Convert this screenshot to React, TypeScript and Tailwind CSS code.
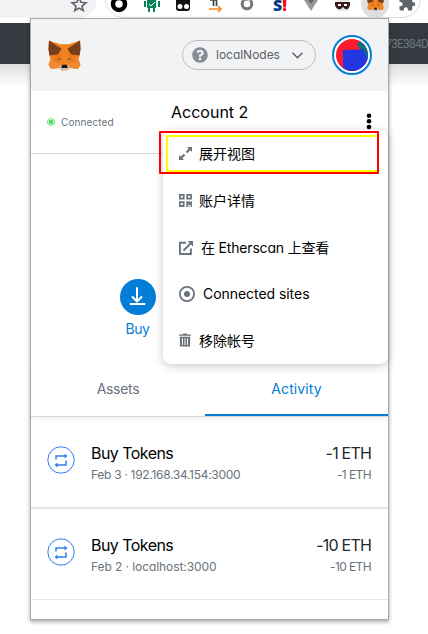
import React from "react";
import { FaQuestionCircle } from "react-icons/fa";
import { MdExtension } from "react-icons/md";

const CJK = "font-['Inter','Noto_Sans_CJK_SC',sans-serif]";

function Fox({ className }: { className: string }) {
  return (
    <svg viewBox="0 0 34 32" className={className} preserveAspectRatio="none">
      <path d="M1 .5L12.500 4.500h9L33 .5l.5 9-1 6-1 5L33.500 25 31 30l-8-1-3.500 2.500h-5L11 29l-8 1L.5 25l2-4.500-1-5-1-6z" fill="#f08423" />
      <path d="M1 .5L14 9l-3.500 6-9 1-1-6.500zM33 .5L20 9l3.500 6 9 1 1-6.500z" fill="#763e1a" />
      <path d="M14 9l-3.500 6L3 17l7 3 4 1zM20 9l3.500 6 7.500 2-7 3-4 1z" fill="#ee7d1c" />
      <path d="M3 20.500l8-.5 2 6-2 3-8 1L.5 25zM31 20.500l-8-.5-2 6 2 3 8 1 2.500-5z" fill="#f0892f" />
      <path d="M4 21l7-1 1 4zM30 21l-7-1-1 4z" fill="#e5761f" />
      <path d="M10 18l4 1.500-.5 1.500-3-1zM24 18l-4 1.500.5 1.500 3-1z" fill="#a15a30" />
      <path d="M13 26h8l1.500 2.500-3 3h-5l-3-3z" fill="#d7c1b3" />
      <path d="M14.500 25.500h5l.8 3.300h-6.600z" fill="#161616" />
    </svg>
  );
}

function BrowserBar() {
  return (
    <div className="relative h-[23px] bg-white">
      <div className="absolute -left-4 -top-5 h-[38px] w-[113px] rounded-full bg-[#f1f3f4]" />
      <div className="absolute left-[105px] -top-5 h-[38px] w-[316px] rounded-full border border-[#dadce0]" />
      <svg className="absolute inset-0" width="428" height="23" viewBox="0 0 428 23">
        <path d="M79-2.500l2 4.800 5 .5-4 3.300 1.200 4.400-4.200-2.400-4.200 2.400 1.200-4.400-4-3.300 5-.5z" fill="none" stroke="#5f6368" strokeWidth="1.600" />
        <circle cx="119" cy="4" r="6" fill="none" stroke="#000" strokeWidth="4.500" />
        <path d="M147 0h9v8h-9zM144 1h2v6h-2zM158 1h2v6h-2zM148 8h2v4h-2zM153 8h2v4h-2z" fill="#08845a" />
        <path d="M149 4l2 2 4-4" fill="none" stroke="#fff" />
        <path d="M176 0h14v8q0 3-3 3h-8q-3 0-3-3z" fill="#111" />
        <circle cx="180" cy="6.500" r="2.500" fill="#fff" /><circle cx="186.500" cy="6.500" r="2.500" fill="#fff" />
        <path d="M210 0h6M213.500 0v6M216.500 0v6" fill="none" stroke="#37474f" strokeWidth="1.700" />
        <path d="M209 9h11M218 6l3 3-3 3" fill="none" stroke="#f58a1f" strokeWidth="1.700" />
        <circle cx="247" cy="4" r="4.800" fill="none" stroke="#777" strokeWidth="3" />
        <path d="M244 0q3-2 6 1" fill="none" stroke="#ccc" strokeWidth="2" />
        <path d="M304 0h14l-7 11z" fill="#9a9a9a" /><path d="M308 0h6l-3 4z" fill="#666" />
        <path d="M337 0h12v11h-12z" fill="#e6e6e6" />
        <path d="M335 2h15v3q-1 5-5 4l-2-2-2 2q-5 1-6-4z" fill="#3b1d20" />
        <path d="M338 4h3v2h-3zM344 4h3v2h-3z" fill="#fff" />
        <circle cx="375" cy="4" r="14" fill="#dedfe1" />
      </svg>
      <span className="absolute left-[273px] top-0 whitespace-nowrap font-['Open_Sans',sans-serif] text-[16px] font-extrabold leading-[11px] text-[#063b8c]">S<span className="text-[#f00]">!</span></span>
      <Fox className="absolute left-[367px] -top-[5px] h-[16px] w-[17px]" />
      <MdExtension className="absolute left-[398px] -top-[6px] size-[18px] text-[#5f6368]" />
    </div>
  );
}

function MenuItem({ icon, children }: { icon: React.ReactNode; children: React.ReactNode }) {
  return (
    <div className={`flex h-[46.700px] items-center pl-4 text-[14px] text-black ${CJK}`}>
      {icon}
      <span className="whitespace-nowrap">{children}</span>
    </div>
  );
}

function Menu() {
  return (
    <div className="absolute left-[132px] top-[111px] z-10 h-[234px] w-[225px] rounded-lg bg-white shadow-[0_2px_10px_rgba(0,0,0,0.22)]">
      <MenuItem icon={<svg className="mr-[7px]" width="13" height="13" viewBox="0 0 13 13" fill="#6a737d"><path d="M8 0h5v5l-1.700-1.700-3 3-1.600-1.600 3-3zM5 13H0V8l1.700 1.700 3-3 1.600 1.600-3 3z" /></svg>}>展开视图</MenuItem>
      <MenuItem icon={<svg className="mr-[7px]" width="13" height="13" viewBox="0 0 13 13" fill="none" stroke="#6a737d" strokeWidth="1.800"><path d="M.9.9h3.800v3.800H.9zM8.200.9H12v3.800H8.200zM.9 8.200h3.800V12H.9zM8.200 13V8.200h2v2h2V7.500M10.500 12.200h1M12 12.200h1" /></svg>}>账户详情</MenuItem>
      <MenuItem icon={<svg className="mr-2 mt-[2px]" width="14" height="14" viewBox="0 0 14 14" fill="none" stroke="#6a737d" strokeWidth="1.900"><path d="M7 1.800H.9V13h11V7.500M4.500 9.500L11.500 2.500" /><path d="M8.500 0H14v5.500z" fill="#6a737d" stroke="none" /></svg>}><span className="relative top-[1px] tracking-[-0.18px]">在 Etherscan 上查看</span></MenuItem>
      <MenuItem icon={<svg className="mr-2 mt-[2px]" width="16" height="16" viewBox="0 0 16 16"><circle cx="8" cy="8" r="7.100" fill="none" stroke="#6a737d" strokeWidth="1.800" /><circle cx="8" cy="8" r="3" fill="#6a737d" /></svg>}><span className="tracking-[-0.05px]">Connected sites</span></MenuItem>
      <MenuItem icon={<svg className="mr-2" width="12" height="14" viewBox="0 0 13 14" fill="#6a737d"><path d="M0 1h4l.7-1h3.600L9 1h4v1.500H0zM1 3.500h11V14H1zM3.300 5v7.500h1V5zM6 5v7.500h1V5zM8.700 5v7.500h1V5z" fillRule="evenodd" /></svg>}>移除帐号</MenuItem>
      <div className="absolute -left-[4px] top-[1px] h-[43px] w-[220px] rounded-[1px] border-2 border-[#ff0000]" />
      <div className="absolute left-[3px] top-[5px] h-[37px] w-[211px] border-2 border-r-0 border-[#ffff00]" />
    </div>
  );
}

function Activity({ meta, metaClass, amount, last }: { meta: string; metaClass: string; amount: string; last?: boolean }) {
  return (
    <div className={`flex border-[#e4e5e7] pl-4 pr-[17px] pt-[25px] ${last ? "h-[91px] border-b" : "h-[92px] border-b-2"}`}>
      <svg className="mt-1 shrink-0" width="28" height="28" viewBox="0 0 28 28" fill="none" stroke="#2f80ed">
        <circle cx="14" cy="14" r="13.200" strokeWidth="1" />
        <path d="M9 13.500V10h10M19 14.500V19H9" strokeWidth="1.500" />
        <path d="M17.500 7.500L20.500 10l-3 2.500zM10.500 16.500L7.500 19l3 2.500z" fill="#2f80ed" stroke="none" />
      </svg>
      <div className="ml-4 flex-1">
        <div className="text-[16px] leading-[22px] tracking-[-0.55px] text-black">Buy Tokens</div>
        <div className={`mt-[3px] text-[12px] leading-4 text-[#6a737d] ${metaClass}`}>{meta}</div>
      </div>
      <div className="text-right">
        <div className="text-[16px] leading-[22px] tracking-[-0.8px] text-[#24292e]">{amount}</div>
        <div className="mt-[3px] text-[12px] leading-4 tracking-[-0.6px] text-[#6a737d]">{amount}</div>
      </div>
    </div>
  );
}

export default function App() {
  return (
    <div className={`relative h-[634px] w-[428px] overflow-hidden bg-white [font-feature-settings:'cv11'] ${CJK}`}>
      <BrowserBar />
      <div className="flex h-[41px] justify-end bg-[#343a40] pt-[13px] font-['Roboto',sans-serif] text-[12px] leading-4 tracking-[-0.8px] text-[#6c757d]">73E384D</div>
      <div className="h-[22px] bg-gradient-to-b from-[#dedede] to-white" />
      <main className="absolute left-[30px] top-[18px] flex h-[602px] w-[359px] flex-col border border-[#a9a9a9] bg-white shadow-[0_2px_4px_rgba(0,0,0,0.35)]">
        <header className="flex h-[72px] shrink-0 items-center bg-[#f2f3f4] pl-[17px] pr-4">
          <Fox className="h-[31px] w-[33px]" />
          <div className="ml-auto flex h-[30px] w-[134px] items-center rounded-full border border-[#bbc0c5] pl-[9px] text-[12px] text-[#5b5d67]">
            <FaQuestionCircle className="mr-2 size-4 text-[#848c96]" />
            <span className="tracking-[-0.02px]">localNodes</span>
            <svg className="ml-auto mr-3" width="11" height="7" viewBox="0 0 11 7" fill="none" stroke="#535a61" strokeWidth="1.300"><path d="M.5.8l5 5 5-5" /></svg>
          </div>
          <svg className="ml-4" width="40" height="40" viewBox="0 0 40 40">
            <circle cx="20" cy="20" r="19" fill="#fff" stroke="#037dd6" strokeWidth="2" />
            <clipPath id="avatar"><circle cx="20" cy="20" r="16" /></clipPath>
            <g clipPath="url(#avatar)"><path d="M4 4h32v32H4z" fill="#fc1a2e" /><path d="M25 9l5-4 12 20-6 3z" fill="#087188" /><path d="M11 15l20-.6 6 11v13H11z" fill="#2337e0" /></g>
          </svg>
        </header>
        <section className="flex h-[63px] shrink-0 border-b border-[#d6d9dc]">
          <div className="flex w-[132px] items-center pl-4 text-[10px] tracking-[0.1px] text-[#6a737d]">
            <svg className="mr-[6px]" width="8" height="8" viewBox="0 0 8 8"><circle cx="4" cy="4" r="3.500" fill="none" stroke="#61e06f" /><circle cx="4" cy="4" r="2.300" fill="#4cd964" /></svg>
            <span>Connected</span>
          </div>
          <div className="pl-2 pt-[9px] text-[16px] leading-6 text-black">Account 2</div>
          <svg className="ml-auto mr-[16px] mt-[22px]" width="6" height="17" viewBox="0 0 6 17"><circle cx="3" cy="2.700" r="2.300" /><circle cx="3" cy="8.300" r="2.300" /><circle cx="3" cy="14" r="2.300" /></svg>
        </section>
        <Menu />
        <section className="h-[210px] shrink-0 border-b border-[#fafafa] pl-[89px] pt-[125px]">
          <div className="flex w-9 flex-col items-center">
            <svg width="36" height="36" viewBox="0 0 36 36" fill="none" stroke="#fff" strokeWidth="2" strokeLinecap="round" strokeLinejoin="round"><circle cx="18" cy="18" r="18" fill="#037dd6" stroke="none" /><path d="M17 9v13M12.500 18l4.500 4.500 4.500-4.500M10.500 25h14" /></svg>
            <span className="mt-1 pr-px text-[14px] leading-5 tracking-[-0.5px] text-[#037dd6]">Buy</span>
          </div>
        </section>
        <nav className="flex h-[53px] shrink-0 border-b border-[#d6d9dc] text-center text-[14px] leading-[50px] text-[#6a737d] shadow-[0_2px_4px_rgba(0,0,0,0.06)]">
          <div className="w-[174px] tracking-[-0.3px]">Assets</div>
          <div className="flex-1 border-b-2 border-[#037dd6] tracking-[0.1px] text-[#037dd6]">Activity</div>
        </nav>
        <Activity meta="Feb 3 · 192.168.34.154:3000" metaClass="tracking-[-0.3px]" amount="-1 ETH" />
        <Activity meta="Feb 2 · localhost:3000" metaClass="tracking-[-0.08px]" amount="-10 ETH" last />
      </main>
    </div>
  );
}
